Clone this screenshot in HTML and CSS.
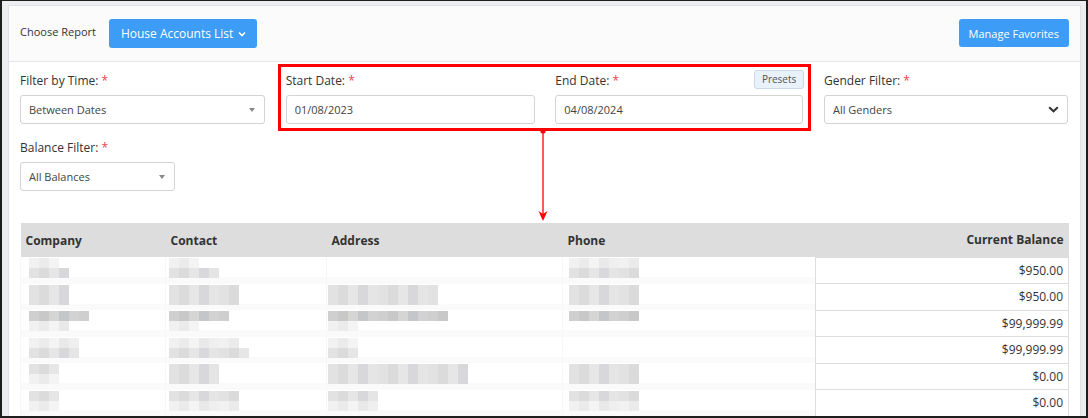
FILE: index.html
```html
<!DOCTYPE html>
<html>
<head>
<meta charset="utf-8">
<link rel="stylesheet" href="styles.css">
</head>
<body>
<div class="frame">
  <div class="card">
    <div class="head">
      <div class="head-left">
        <span class="choose">Choose Report</span>
        <button class="btn btn-report">House Accounts List
          <svg class="chev" width="8" height="6" viewBox="0 0 8 6"><path d="M1 1.5 L4 4.5 L7 1.5" fill="none" stroke="#fff" stroke-width="1.6"/></svg>
        </button>
      </div>
      <button class="btn btn-fav">Manage Favorites</button>
    </div>

    <div class="filters">
      <div class="grid">
        <div class="field">
          <div class="label">Filter by Time: <span class="req">*</span></div>
          <div class="control select"><span>Between Dates</span><i class="caret"></i></div>
        </div>
        <div class="field">
          <div class="label">Start Date: <span class="req">*</span></div>
          <div class="control input">01/08/2023</div>
        </div>
        <div class="field">
          <div class="label label-split"><span>End Date: <span class="req">*</span></span><span class="presets">Presets</span></div>
          <div class="control input">04/08/2024</div>
        </div>
        <div class="field">
          <div class="label">Gender Filter: <span class="req">*</span></div>
          <div class="control select"><span>All Genders</span>
            <svg class="gchev" width="11" height="7" viewBox="0 0 11 7"><path d="M1.2 1.2 L5.5 5.3 L9.8 1.2" fill="none" stroke="#333" stroke-width="2"/></svg>
          </div>
        </div>
      </div>
      <div class="field field-bal">
        <div class="label">Balance Filter: <span class="req">*</span></div>
        <div class="control select"><span>All Balances</span><i class="caret"></i></div>
      </div>

      <table class="report">
        <thead>
          <tr>
            <th class="c1">Company</th>
            <th class="c2">Contact</th>
            <th class="c3">Address</th>
            <th class="c4">Phone</th>
            <th class="c5">Current Balance</th>
          </tr>
        </thead>
        <tbody>
          <tr>
            <td class="r rc1"><span class="px l w3"></span><span class="px m w4"></span></td>
            <td class="r rc2"><span class="px l w3"></span><span class="px m w5"></span></td>
            <td class="r rc3"></td>
            <td class="r rc4"><span class="px l w7"></span><span class="px m w7"></span></td>
            <td class="bal">$950.00</td>
          </tr>
          <tr>
            <td class="r rc1"><span class="px m w4"></span><span class="px m w4"></span></td>
            <td class="r rc2"><span class="px m w7"></span><span class="px m w7"></span></td>
            <td class="r rc3"><span class="px m w11"></span><span class="px m w11"></span></td>
            <td class="r rc4"><span class="px m w7"></span><span class="px m w7"></span></td>
            <td class="bal">$950.00</td>
          </tr>
          <tr>
            <td class="r rc1"><span class="px d w6"></span><span class="px l w4"></span></td>
            <td class="r rc2"><span class="px d w6"></span><span class="px l w3"></span></td>
            <td class="r rc3"><span class="px d w12"></span><span class="px l w3"></span></td>
            <td class="r rc4"><span class="px d w7"></span></td>
            <td class="bal">$99,999.99</td>
          </tr>
          <tr>
            <td class="r rc1"><span class="px l w5"></span><span class="px m w5"></span></td>
            <td class="r rc2"><span class="px l w7"></span><span class="px m w8"></span></td>
            <td class="r rc3"><span class="px l w3"></span><span class="px m w3"></span></td>
            <td class="r rc4"></td>
            <td class="bal">$99,999.99</td>
          </tr>
          <tr>
            <td class="r rc1"><span class="px m w3"></span><span class="px l w3"></span></td>
            <td class="r rc2"><span class="px m w5"></span><span class="px m w5"></span></td>
            <td class="r rc3"><span class="px m w14"></span><span class="px m w14"></span></td>
            <td class="r rc4"><span class="px m w7"></span><span class="px m w7"></span></td>
            <td class="bal">$0.00</td>
          </tr>
          <tr>
            <td class="r rc1"><span class="px m w3"></span><span class="px l w3"></span></td>
            <td class="r rc2"><span class="px m w7"></span><span class="px l w7"></span></td>
            <td class="r rc3"><span class="px m w5"></span><span class="px l w5"></span></td>
            <td class="r rc4"><span class="px m w7"></span><span class="px l w7"></span></td>
            <td class="bal">$0.00</td>
          </tr>
        </tbody>
      </table>
    </div>
  </div>
</div>

<div class="highlight"></div>
<svg class="arrow" width="16" height="96" viewBox="0 0 16 96">
  <circle cx="8" cy="3" r="2.6" fill="#f00"/>
  <line x1="8" y1="3" x2="8" y2="88" stroke="#f00" stroke-width="1.3"/>
  <path d="M3.5 83 L8 93 L12.5 83 L8 86 Z" fill="#f00"/>
</svg>
</body>
</html>
```

FILE: styles.css
```css
* { box-sizing: border-box; }
html, body { margin: 0; padding: 0; }
body {
  position: relative;
  width: 1088px;
  height: 418px;
  overflow: hidden;
  font-family: "Open Sans", "Noto Sans", sans-serif;
  color: #333;
  background: #fff;
}
.frame {
  width: 1088px;
  height: 418px;
  border: 2px solid #1e1e1e;
  border-top-width: 1px;
  background: #eceef1;
  padding: 4px 5px 0 6px;
  overflow: hidden;
}
.card {
  background: #fff;
  border: 1px solid #dfe2e6;
  height: 420px;
}
.head {
  height: 56px;
  border-bottom: 1px solid #e6e7e9;
  background: #fbfbfc;
  display: flex;
  align-items: center;
  justify-content: space-between;
  padding: 0 11px 0 11px;
}
.head-left { display: flex; align-items: center; }
.choose { font-size: 11px; color: #333; margin-top: -4px; }
.btn {
  font-family: "Open Sans", "Noto Sans", sans-serif;
  border: none;
  border-radius: 3px;
  background: #3c9cf6;
  color: #fff;
  cursor: pointer;
  display: inline-flex;
  align-items: center;
}
.btn-report {
  margin-left: 13px;
  height: 29px;
  font-size: 12px;
  padding: 0 11px 0 12px;
}
.chev { margin-left: 5px; margin-top: 1px; }
.btn-fav {
  height: 28px;
  font-size: 11px;
  padding: 0 10px;
  margin-top: -1px;
}
.filters { padding: 10px 12px 0 11px; }
.grid {
  display: grid;
  grid-template-columns: 245px 249px 248px 244px;
  column-gap: 20.67px;
}
.field { display: flex; flex-direction: column; }
.label {
  height: 18px;
  line-height: 18px;
  font-size: 12px;
  color: #333;
  margin-bottom: 5px;
}
.req { color: #e8434b; }
.label-split {
  display: flex;
  justify-content: space-between;
  align-items: flex-start;
}
.presets {
  height: 19px;
  line-height: 17px;
  font-size: 10px;
  color: #555;
  background: #e9f1fa;
  border: 1px solid #cbd8e6;
  border-radius: 3px;
  padding: 0 7px;
  margin-top: -2px;
  margin-right: -1px;
}
.control {
  height: 29px;
  border: 1px solid #d3d3d3;
  border-radius: 3px;
  font-size: 11px;
  color: #444;
  display: flex;
  align-items: center;
  justify-content: space-between;
  padding: 0 8px 0 8px;
  background: #fff;
}
.caret {
  width: 0;
  height: 0;
  border-left: 3px solid transparent;
  border-right: 3px solid transparent;
  border-top: 4px solid #888;
  margin-right: 1px;
}
.gchev { margin-right: 0; }
.field-bal { width: 155px; margin-top: 15px; }
.report {
  margin-top: 32px;
  width: 1048px;
  border-collapse: collapse;
  table-layout: fixed;
  font-size: 12px;
}
.report th {
  background: #dddddd;
  height: 34px;
  font-weight: 700;
  text-align: left;
  padding: 0 5px;
  color: #333;
}
.report th.c5 { text-align: right; }
.c1 { width: 145px; }
.c2 { width: 161px; }
.c3 { width: 236px; }
.c4 { width: 253px; }
.c5 { width: 253px; }
.report td { height: 26.5px; padding: 0; }
.r {
  vertical-align: top;
  padding-top: 1px !important;
  background: linear-gradient(#fff 0 20px, #fafafa 20px 100%);
  border-left: 1px solid #f7f7f7;
}
.rc1 { padding-left: 8px !important; }
.rc2 { padding-left: 3px !important; }
.rc3 { padding-left: 1px !important; }
.rc4 { padding-left: 6px !important; }
.bal {
  text-align: right;
  padding-right: 5px !important;
  border: 1px solid #dddddd;
  color: #333;
}
.px { display: block; height: 10px; }
.px.l { background: repeating-linear-gradient(90deg, #f1f1f1 0 10px, #ebebeb 10px 20px, #f4f4f4 20px 30px, #e9e9e9 30px 40px, #efefef 40px 50px); }
.px.m { background: repeating-linear-gradient(90deg, #e2e2e2 0 10px, #dbdbdb 10px 20px, #e7e6e6 20px 30px, #d8d8da 30px 40px, #e5e5e5 40px 50px); }
.px.d { background: repeating-linear-gradient(90deg, #cfcfcf 0 10px, #c8c8c8 10px 20px, #d5d5d3 20px 30px, #c5c6ca 30px 40px, #d2d2d2 40px 50px); }
.w3 { width: 30px; }
.w4 { width: 40px; }
.w5 { width: 50px; }
.w6 { width: 60px; }
.w7 { width: 70px; }
.w8 { width: 80px; }
.w11 { width: 110px; }
.w12 { width: 120px; }
.w14 { width: 140px; }

.highlight {
  position: absolute;
  left: 278px;
  top: 64px;
  width: 533px;
  height: 67px;
  border: 3px solid #ff0000;
}
.arrow {
  position: absolute;
  left: 535px;
  top: 128px;
}
```
